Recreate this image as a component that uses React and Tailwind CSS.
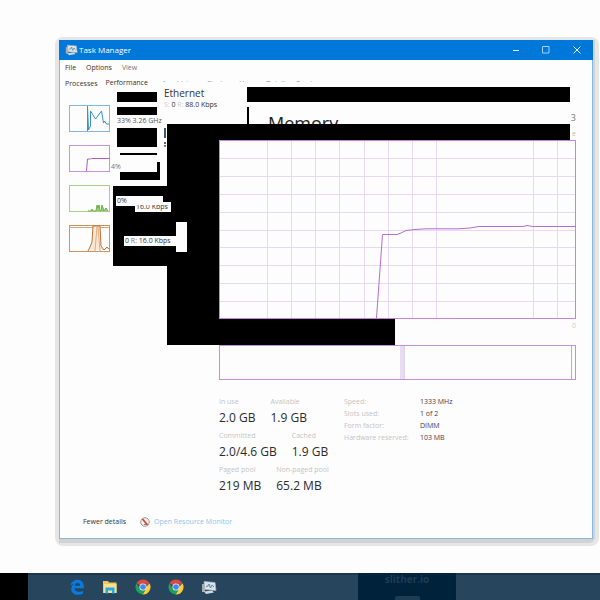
import React from "react";

const columns = [48, 72, 96, 120, 145, 169, 193, 217, 314, 338];
const rows = [18, 36, 54, 72, 90, 107, 125, 143, 161];

function TaskIcon({ className }) {
  return (
    <svg viewBox="0 0 16 14" className={className} aria-hidden="true">
      <path d="M1 3.500h3v8H1z" fill="#a9aeb2" />
      <path d="M3 1l11 1 1 8-11-1z" fill="#e9edf0" stroke="#a4adb3" strokeWidth="0.8" />
      <path d="M4.500 2.500l8.500 1 .5 5-8.500-1z" fill="#cfe0ea" />
      <path d="M5 6l2-.5 1-2 1.500 4 1.500-3 2 2" fill="none" stroke="#4d86aa" strokeWidth="0.9" />
      <path d="M3 11l8-1 2 2-8 1.500z" fill="#d5d8da" />
    </svg>
  );
}

function ChromeIcon() {
  return (
    <svg viewBox="0 0 16 16" className="size-4" aria-hidden="true">
      <path d="M8 8L1.500 4.200A7.500 7.500 0 0 1 14.500 4.300H8z" fill="#dd4b3e" />
      <path d="M8 8h3.200l3.300-3.700A7.500 7.500 0 0 1 7.600 15.500L11 9.500z" fill="#fccd3a" />
      <path d="M8 8l3 2-3.400 5.500A7.500 7.500 0 0 1 1.500 4.200L5 9.800z" fill="#1fa05b" />
      <path d="M8 4.300h6.500L11 6.500z" fill="#dd4b3e" />
      <circle cx="8" cy="8" r="3.600" fill="#f4f4f4" />
      <circle cx="8" cy="8" r="2.800" fill="#4285f4" />
    </svg>
  );
}

function Thumb({ stroke, children }) {
  return (
    <svg viewBox="0 0 41 27" className="block h-[27px] w-[41px]" fill="none" aria-hidden="true">
      <rect x="0.5" y="0.5" width="40" height="26" stroke={stroke} />
      {children}
    </svg>
  );
}

function Stat({ label, value }) {
  return (
    <div className="h-[34px]">
      <dt className="text-[7px] leading-3 text-[#c4c4c4]">{label}</dt>
      <dd className="text-[12px] leading-5 text-[#2b2b2b]">{value}</dd>
    </div>
  );
}

function Glitches() {
  return (
    <>
      <div className="absolute top-[22px] left-[100px] h-[42px] w-[87px] bg-[#fdfdfd]" />
      <div className="absolute top-[22px] right-[22px] left-[187px] h-[5px] bg-[#fdfdfd]" />
      <div className="absolute top-[27px] right-[22px] left-[187px] h-[15px] bg-black" />
      <div className="absolute top-[47px] left-[187px] h-[17px] w-[2px] bg-black" />
      <div className="absolute top-[64px] right-[22px] left-[107px] h-4 bg-black" />
      <div className="absolute top-[64px] left-[107px] h-[221px] w-[228px] bg-black" />

      <div className="absolute top-8 left-[57px] h-[10px] w-10 bg-black" />
      <div className="absolute top-[47px] left-[57px] h-2 w-10 bg-black" />
      <div className="absolute top-[68px] left-[57px] h-[19px] w-10 bg-black" />
      <div className="absolute top-[93px] left-[60px] h-[2px] w-[37px] bg-black" />
      <div className="absolute top-[102px] left-[60px] h-[18px] w-10 bg-black" />
      <div className="absolute top-[102px] left-[51px] h-[10px] w-[46px] bg-[#fdfdfd] leading-[10px] text-[#777]">4%</div>
      <div className="absolute top-[126px] left-[53px] h-20 w-[54px] bg-black" />
      <div className="absolute top-[142px] left-[75px] h-[10px] w-9 bg-[#fdfdfd] px-px leading-[10px] whitespace-nowrap">16.0 Kbps</div>
      <div className="absolute top-[136px] left-[56px] h-[10px] w-[19px] bg-[#fdfdfd] px-px leading-[10px]">0%</div>
      <div className="absolute top-[136px] left-[75px] h-[9px] w-7 bg-[#fdfdfd]" />
      <div className="absolute top-[162px] left-[116px] h-[30px] w-[11px] bg-[#fdfdfd]" />
      <div className="absolute top-[176px] left-[64px] h-[10px] w-[53px] bg-[#fdfdfd] px-px leading-[10px] whitespace-nowrap">
        0 <span className="text-[#777]">R:</span> 16.0 Kbps
      </div>
      <div className="absolute top-[56px] left-[57px] leading-[10px] whitespace-nowrap text-[#555]">33% 3.26 GHz</div>
      <div className="absolute top-[26px] left-[104px] whitespace-nowrap">
        <p className="text-[10px] leading-[14px]">Ethernet</p>
        <p className="leading-[10px]">
          <span className="text-[#ccc]">S:</span> 0 <span className="text-[#ccc]">R:</span> 88.0 Kbps
        </p>
      </div>
      <div className="absolute top-[68px] left-[104px] h-[10px] w-[3px] border-l-2 border-[#3b5870]" />
      <div className="absolute top-[82px] left-[104px] h-[5px] w-[3px] border-l-2 border-dotted border-[#666]" />
    </>
  );
}

export default function App() {
  return (
    <div className="flex min-h-screen flex-col bg-[#fdfdfd] font-['Open_Sans','Noto_Sans',sans-serif] text-[7px] text-[#333]">
      <div className="mt-[37px] mr-px mb-6 ml-[55px] rounded-[8px] bg-[#e6e6e6] pt-[3px] pr-1 pb-[3px] pl-1">
        <div className="rounded-br-[6px] bg-[#d2d2d2] pr-[2px] pb-1">
          <main>
            <header className="flex h-5 items-center bg-[#0078d9] pl-1.5 text-white">
              <TaskIcon className="h-3 w-[13px]" />
              <h1 className="ml-px text-[8px]">Task Manager</h1>
              <div className="ml-auto flex">
                <button aria-label="Minimize" className="flex h-5 w-[30px] items-center justify-center">
                  <svg viewBox="0 0 8 8" className="size-2" stroke="#dcecfa" fill="none"><path d="M1 4.500h6" /></svg>
                </button>
                <button aria-label="Maximize" className="flex h-5 w-[30px] items-center justify-center">
                  <svg viewBox="0 0 8 8" className="size-2" stroke="#a8d0f2" fill="none"><path d="M.5.500h6.500v6.500H.5z" /></svg>
                </button>
                <button aria-label="Close" className="flex h-5 w-8 items-center justify-center">
                  <svg viewBox="0 0 8 8" className="size-2" stroke="#e6f2fc" fill="none"><path d="M.5.500l7 7M7.500.500l-7 7" /></svg>
                </button>
              </div>
            </header>

            <div className="relative isolate border-x border-b border-[#83b9e3] bg-[#fdfdfd]">
              <nav className="flex h-[15px] items-center gap-[10px] pt-px pl-[5px]">
                <button>File</button>
                <button>Options</button>
                <button className="text-[#777]">View</button>
              </nav>
              <div role="tablist" className="flex h-[15px] items-start gap-2 pl-[5px] leading-[16px]">
                <button role="tab" className="pt-px">Processes</button>
                <button role="tab" aria-selected="true">Performance</button>
                <div className="flex gap-2 pt-px pl-1.5 text-[#888]">
                  <button role="tab">App history</button>
                  <button role="tab">Startup</button>
                  <button role="tab">Users</button>
                  <button role="tab">Details</button>
                  <button role="tab">Services</button>
                </div>
              </div>
              <Glitches />

              <div className="flex">
                <aside className="flex w-[159px] shrink-0 flex-col gap-[13px] pt-[15px] pl-[9px]">
                  <Thumb stroke="#82b8df">
                    <path d="M18.500 26V1l1 24 2-4V6l5 8 6-8 2 12 1-2 2 3h3" stroke="#3b8fca" />
                  </Thumb>
                  <Thumb stroke="#c994dd">
                    <path d="M17.500 26l1-12h3l1-.5h18" stroke="#ad5cc7" />
                  </Thumb>
                  <Thumb stroke="#a4d287">
                    <path d="M19 26h3l1-2 1 2h3l1-6 1 3 1-3 1 6h1l1-6 2 6 2-3 2 3" stroke="#70b04a" fill="#9acb7d" />
                  </Thumb>
                  <Thumb stroke="#cf9360">
                    <path d="M0 2.500h40" stroke="#d9a77c" />
                    <path d="M19 26l2-4 2-5 1-16h7l1 20 3 4 3-3 2 2" stroke="#bd7434" fill="#f8e8d9" />
                    <path d="M26 26l2-24 1 0 2 24" stroke="#dcae84" />
                  </Thumb>
                </aside>

                <section className="min-w-0 flex-1 pr-4">
                  <div className="flex h-[50px] justify-between pl-[49px]">
                    <h2 className="pt-5 text-[18px] leading-[26px] text-[#222]">Memory</h2>
                    <div className="pt-[22px] text-right">
                      <p className="text-[9px] leading-3 text-[#777]">3</p>
                      <p className="pt-1 leading-3 text-[#d2b7a0]">e</p>
                    </div>
                  </div>

                  <svg viewBox="0 0 357 179" preserveAspectRatio="none" className="relative z-10 block h-[179px] w-full bg-[#fdfdfd]" fill="none" role="img" aria-label="Memory usage">
                    {columns.map((x) => <path key={x} d={`M${x + 0.5} 0V179`} stroke="#e8d9f0" />)}
                    {rows.map((y) => <path key={y} d={`M0 ${y + 0.5}H357`} stroke="#e8d9f0" />)}
                    <rect x="0.500" y="0.500" width="356" height="178" stroke="#c583dc" />
                    <path d="M157.500 178L163.500 94.500H178L182 93L187 90.500L196 89.500L207 88.800H240L251 88L260 86.500H304L308 85.500L314 86.500H357" stroke="#b56ccd" />
                  </svg>
                  <p className="h-[26px] text-right leading-[14px] text-[#ccc]">0</p>
                  <div className="relative z-10 flex h-[35px] justify-end border border-[#c38fd6] bg-[#fdfdfd]">
                    <div className="w-[5px] border-r border-[#d5d7eb] bg-[#e9dcf0]" />
                    <div className="w-[47%] border-r border-[#c9a0d9]" />
                    <div className="w-[3px]" />
                  </div>

                  <div className="flex gap-2 pt-4 whitespace-nowrap">
                    <dl className="w-[117px]">
                      <div className="flex gap-[15px]">
                        <Stat label="In use" value="2.0 GB" />
                        <Stat label="Available" value="1.9 GB" />
                      </div>
                      <div className="flex gap-[15px]">
                        <Stat label="Committed" value="2.0/4.6 GB" />
                        <Stat label="Cached" value="1.9 GB" />
                      </div>
                      <div className="flex gap-[15px]">
                        <Stat label="Paged pool" value="219 MB" />
                        <Stat label="Non-paged pool" value="65.2 MB" />
                      </div>
                    </dl>
                    <table className="self-start leading-3">
                      <tbody>
                        {[["Speed:", "1333 MHz"], ["Slots used:", "1 of 2"], ["Form factor:", "DIMM"], ["Hardware reserved:", "103 MB"]].map(([name, value]) => (
                          <tr key={name}>
                            <th scope="row" className="w-[76px] p-0 text-left font-normal text-[#c4c4c4]">{name}</th>
                            <td className="p-0 text-[#4b3944]">{value}</td>
                          </tr>
                        ))}
                      </tbody>
                    </table>
                  </div>
                </section>
              </div>

              <footer className="flex h-10 items-center gap-[14px] pt-2 pl-[23px]">
                <button>Fewer details</button>
                <a href="#monitor" className="flex items-center gap-1 text-[#8fc4e8]">
                  <svg viewBox="0 0 10 10" className="size-[10px]" aria-hidden="true">
                    <circle cx="5" cy="5" r="4.300" fill="#f2eee9" stroke="#a49d96" />
                    <path d="M2.500 2l5 6" stroke="#c8443c" strokeWidth="1.700" />
                    <path d="M4 7.500h2" stroke="#888" />
                  </svg>
                  Open Resource Monitor
                </a>
              </footer>
            </div>
          </main>
        </div>
      </div>

      <footer className="mt-auto flex h-[27px] bg-[#27455c]">
        <div className="w-7 bg-black" />
        <div className="flex flex-1 border-t-2 border-[#1c384e]">
          <nav className="flex w-[330px] items-center gap-[17px] pb-px pl-[41px]">
            <button aria-label="Edge">
              <svg viewBox="0 0 16 16" className="size-4" aria-hidden="true">
                <path d="M1 7.500C2 3 5 .7 8.500.7c4.200 0 6.300 3 6.300 6.500v2H5.500c.2 2.500 2 3.500 4.500 3.500 1.700 0 3-.4 4-1v3.100c-1.500.7-3 1-4.800 1C5 15.800 2.200 13.500 2.200 10c0-2.400 1.300-4.300 3.300-5.400C3.500 5 2 6 1 7.500zM5.700 6.700h5.500C11.200 4.800 10.200 3.900 8.600 3.900 7 3.900 6 5 5.700 6.700z" fill="#0a7bdc" />
              </svg>
            </button>
            <button aria-label="File Explorer">
              <svg viewBox="0 0 16 16" className="size-4" aria-hidden="true">
                <path d="M1 2h5l1 1.500h7.500V14H1z" fill="#efc75e" />
                <path d="M2 5h12.500v9H2z" fill="#fbe08c" />
                <path d="M3.500 8.500h9V14.500h-2.500v-3H6v3H3.500z" fill="#23a9e6" />
              </svg>
            </button>
            <button aria-label="Chrome"><ChromeIcon /></button>
            <button aria-label="Chrome, second window"><ChromeIcon /></button>
            <button aria-label="Task Manager"><TaskIcon className="h-[15px] w-4" /></button>
          </nav>
          <button className="-mt-0.5 flex h-[27px] w-[98px] flex-col items-center justify-between overflow-hidden bg-[#00233c] text-[#1d3d55]">
            <span className="text-[10px] leading-[13px] font-bold">slither.io</span>
            <span className="h-1 w-[25px] rounded-t-[2px] bg-[#1d3d55]" />
          </button>
        </div>
      </footer>
    </div>
  );
}
